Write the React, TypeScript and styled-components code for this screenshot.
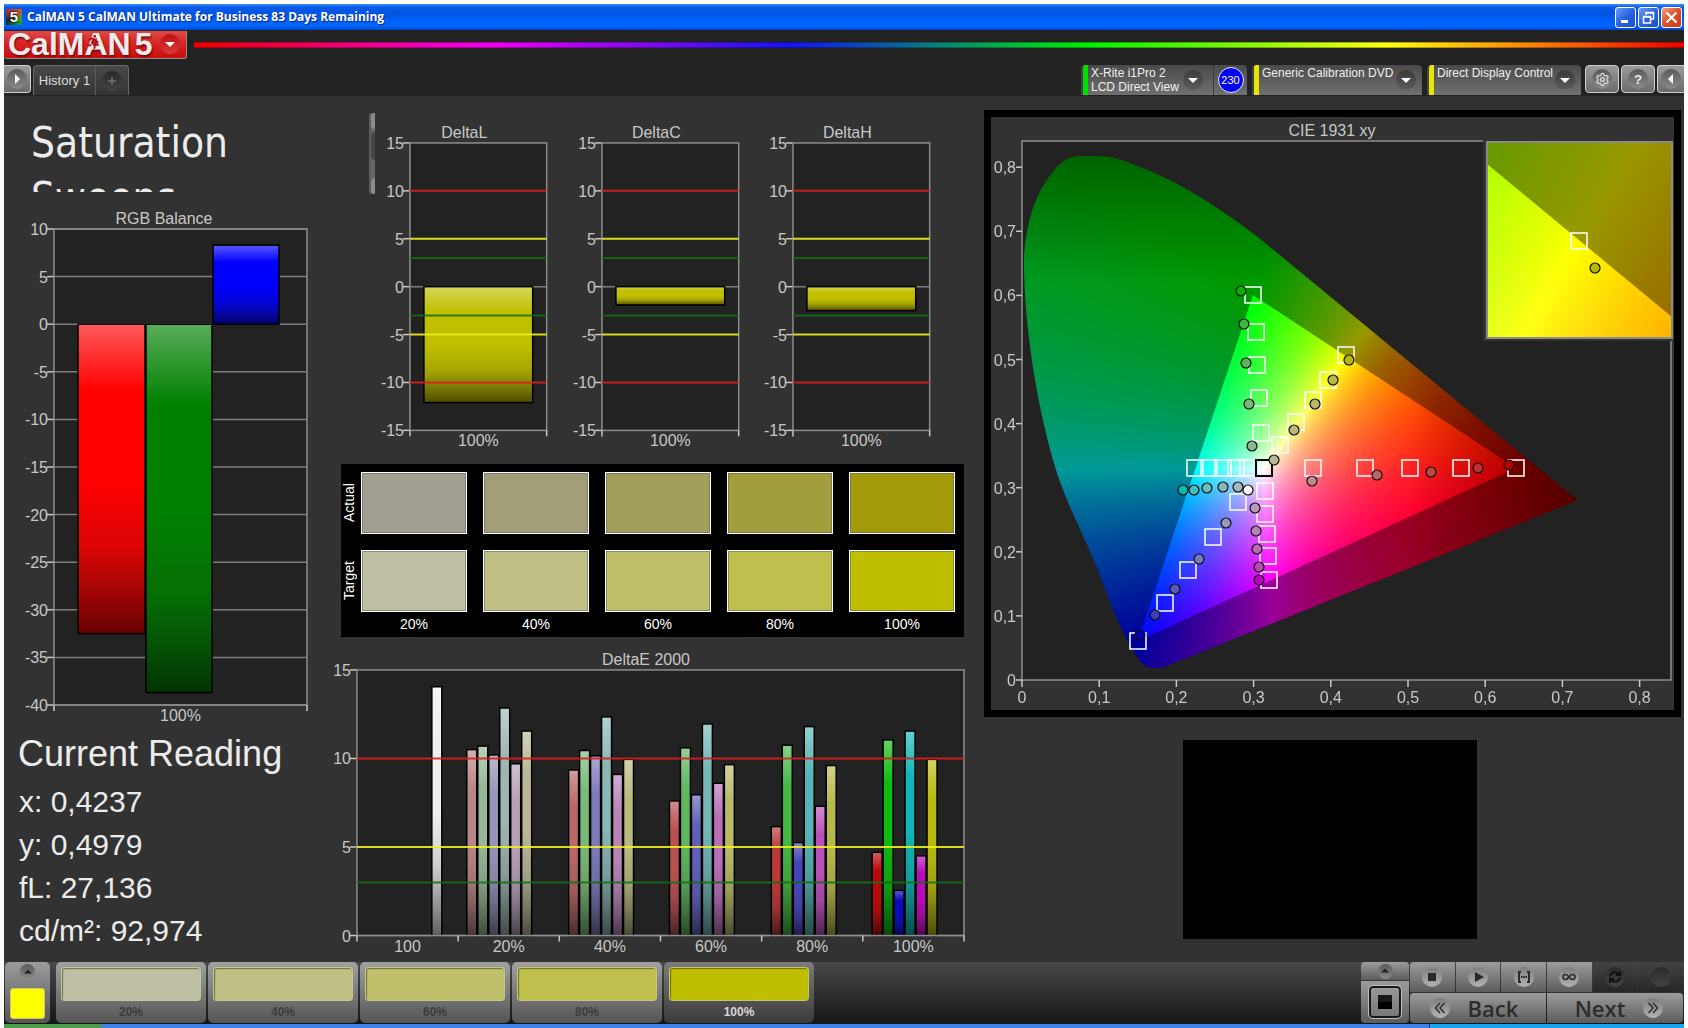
import React, { useLayoutEffect, useRef } from "react";
import styled, { createGlobalStyle } from "styled-components";
import { FaRunning } from "react-icons/fa";
import { Settings } from "lucide-react";

const SANS = '"Liberation Sans", Arial, sans-serif';
const HUMANIST = '"Open Sans", "Noto Sans", sans-serif';

const GlobalStyle = createGlobalStyle`
  *, *::before, *::after { box-sizing: border-box; }
  body { margin: 0; background: #fdfdfd; font-family: ${SANS}; color: #ececec; }
  button { font-family: inherit; color: inherit; border: 0; padding: 0; cursor: pointer; }
  h1, h2, p { margin: 0; font-weight: 400; }
  svg { display: block; }
`;

/* ---------- window frame ---------- */

const Window = styled.div`
  display: flex;
  flex-direction: column;
  min-height: 100vh;
  padding: 4px 4px 0;
`;

const TitleBar = styled.header`
  display: flex;
  align-items: center;
  gap: 5px;
  height: 26px;
  padding: 0 2px;
  background: linear-gradient(#3c93ff 0, #0a5ce8 3px, #0055e2 9px, #0061fb 17px, #0066ff 22px, #0046c8 26px);
`;

const AppIcon = styled.span`
  width: 16px;
  height: 16px;
  background: conic-gradient(#d33, #a63, #2a2, #173, #222, #933, #d33);
  color: #fff;
  font: bold 15px/16px ${SANS};
  text-align: center;
  text-shadow: 0 0 2px #000, 0 0 2px #000;
`;

const TitleText = styled.span`
  flex: 1;
  color: #fff;
  font: 700 12px/18px ${HUMANIST};
  text-shadow: 1px 1px 1px #10257c;
`;

const WindowButtons = styled.div`
  display: flex;
  gap: 2px;
`;

const WindowButton = styled.button<{ $close?: boolean }>`
  display: grid;
  place-items: center;
  width: 21px;
  height: 21px;
  border: 1px solid #fff;
  border-radius: 3px;
  background: ${(p) =>
    p.$close
      ? "linear-gradient(135deg, #f0a088, #e04e26 50%, #c83c14)"
      : "linear-gradient(135deg, #6f9df8, #2b62e0 50%, #1a50cc)"};
`;

/* ---------- application header ---------- */

const AppHeader = styled.div`
  background: #222;
  height: 66px;
  display: flex;
  flex-direction: column;
  gap: 6px;
`;

const BrandRow = styled.div`
  display: flex;
  align-items: center;
  gap: 7px;
  height: 29px;
`;

const Logo = styled.button`
  position: relative;
  display: flex;
  align-items: center;
  gap: 4px;
  width: 183px;
  height: 28px;
  padding: 0 6px 0 4px;
  overflow: hidden;
  border: solid #8d8d8d;
  border-width: 0 1px 1px 0;
  border-radius: 0 0 3px 3px;
  background: linear-gradient(#e04a48, #d62222 50%, #c80f0f);
`;

const LogoText = styled.span<{ $grow?: boolean }>`
  flex: ${(p) => (p.$grow ? 1 : "none")};
  text-align: left;
  white-space: nowrap;
  font: bold 32px/24px ${SANS};
  color: #ececec;
  text-shadow: 1px 2px 2px rgba(90, 0, 0, 0.7);
`;

const Runner = styled(FaRunning)`
  position: absolute;
  left: 82px;
  top: 4px;
  width: 14px;
  height: 14px;
  color: #b01010;
`;

const Spectrum = styled.div`
  flex: 1;
  height: 6px;
  background: linear-gradient(90deg, #f00000, #f000f0 20%, #1414f0 40%, #00f000 60%, #ffff10 80%, #f00000);
  border-bottom: 1px solid rgba(0, 0, 0, 0.3);
  border-top: 1px solid rgba(0, 0, 0, 0.3);
`;

const TabRow = styled.div`
  display: flex;
  align-items: flex-start;
  height: 31px;
`;

const Spacer = styled.div`
  flex: 1;
`;

const ChromeButton = styled.button<{ $edge?: "left" | "right" }>`
  display: grid;
  place-items: center;
  width: ${(p) => (p.$edge ? "27px" : "34px")};
  height: 28px;
  margin-left: ${(p) => (p.$edge === "left" ? "0" : "2px")};
  border: 1px solid #cfcfcf;
  border-left-width: ${(p) => (p.$edge === "left" ? 0 : 1)}px;
  border-right-width: ${(p) => (p.$edge === "right" ? 0 : 1)}px;
  border-radius: ${(p) => (p.$edge === "left" ? "0 4px 4px 0" : p.$edge === "right" ? "4px 0 0 4px" : "4px")};
  background: linear-gradient(#9a9a9a, #6c6c6c);
`;

const Disc = styled.span<{ $size?: number; $tone?: "dark" | "mid" | "light" | "off" }>`
  display: grid;
  place-items: center;
  flex: none;
  width: ${(p) => p.$size ?? 20}px;
  height: ${(p) => p.$size ?? 20}px;
  border-radius: 50%;
  background: ${(p) =>
    ({
      dark: "linear-gradient(#3a3a3a, #5c5c5c)",
      mid: "linear-gradient(#5a5a5a, #8a8a8a)",
      light: "linear-gradient(#7c7c7c, #b2b2b2)",
      off: "linear-gradient(#2a2a2a, #444)",
    })[p.$tone ?? "dark"]};
`;

const RedDisc = styled(Disc)`
  background: linear-gradient(#b81212, #dc3c3c);
`;

const HistoryTabs = styled.div`
  display: flex;
  height: 30px;
  margin-left: 2px;
  border: 1px solid #6a6a6a;
  border-bottom: 0;
  border-radius: 4px 4px 0 0;
  background: linear-gradient(#484848, #343434);
`;

const TabButton = styled.button<{ $narrow?: boolean }>`
  display: grid;
  place-items: center;
  width: ${(p) => (p.$narrow ? "33px" : "61px")};
  background: none;
  border-left: ${(p) => (p.$narrow ? "1px solid #5c5c5c" : "0")};
  font-size: 13px;
  white-space: nowrap;
  color: #dedede;
`;

const Devices = styled.div`
  display: flex;
  gap: 5px;
  margin-right: 2px;
`;

const Device = styled.div<{ $accent: string; $width: number }>`
  display: flex;
  width: ${(p) => p.$width}px;
  height: 30px;
  border-left: 2px solid #444;
  border-radius: 4px 4px 0 0;
  background: linear-gradient(90deg, ${(p) => p.$accent} 5px, transparent 5px), linear-gradient(#4a4a4a, #707070);
`;

const DevicePicker = styled.button`
  flex: 1;
  display: flex;
  align-items: center;
  justify-content: space-between;
  padding: 0 6px 0 8px;
  background: none;
  color: #f0f0f0;
  font-size: 12px;
  line-height: 14px;
  text-align: left;
  white-space: nowrap;
`;

const MeterPicker = styled(DevicePicker)`
  padding-right: 10px;
`;

const DeviceName = styled.span`
  align-self: flex-start;
  padding-top: 1px;
`;

const MeterBadge = styled.span`
  display: grid;
  place-items: center;
  width: 34px;
  border-left: 1px solid #3a3a3a;
`;

const MeterCount = styled.span`
  width: 26px;
  height: 26px;
  border: 1px solid #e8e8ff;
  border-radius: 50%;
  background: #0000f4;
  color: #fff;
  font-size: 11px;
  line-height: 24px;
  text-align: center;
`;

/* ---------- workspace ---------- */

const Workspace = styled.main`
  flex: 1;
  display: grid;
  grid-template-columns: 288fr 636fr 697fr;
  column-gap: 20px;
  align-items: start;
  padding: 14px 3px 4px 16px;
  background: #323232;
`;

const Column = styled.section`
  display: flex;
  flex-direction: column;
  min-width: 0;
`;

const TitleBox = styled.div`
  height: 82px;
  padding: 5px 0 0 11px;
  overflow: hidden;
`;

const PageTitle = styled.h1`
  font: 42px/55px "DejaVu Sans Condensed", "DejaVu Sans", sans-serif;
  font-stretch: condensed;
`;

const BalanceArea = styled.div`
  padding-top: 20px;
`;

const ReadingTitle = styled.h2`
  margin: 8px 0 6px -2px;
  font-size: 36px;
  line-height: 40px;
  white-space: nowrap;
`;

const Reading = styled.p`
  margin-left: -1px;
  font-size: 30px;
  line-height: 43px;
  white-space: nowrap;
`;

const DeltaRow = styled.div`
  display: grid;
  grid-template-columns: 6px 1fr;
  column-gap: 6px;
  align-items: start;
  padding: 3px 33px 0 41px;
`;

const ScrollTrack = styled.div`
  display: flex;
  flex-direction: column;
  justify-content: space-between;
  height: 81px;
  border-left: 2px solid #5e5e5e;
  border-radius: 3px 0 0 3px;
  background: #666;
`;

const ScrollPart = styled.span<{ $thumb?: boolean }>`
  height: ${(p) => (p.$thumb ? 28 : 16)}px;
  margin-bottom: ${(p) => (p.$thumb ? 16 : 0)}px;
  border-radius: 4px 0 0 4px;
  background: ${(p) => (p.$thumb ? "#474747" : "#8c8c8c")};
`;

const DeltaCharts = styled.div`
  display: grid;
  grid-template-columns: repeat(3, 1fr);
  column-gap: 25px;
  padding-top: 10px;
`;

const SwatchPanel = styled.div`
  display: grid;
  grid-template-columns: 12px repeat(5, 1fr);
  grid-template-rows: 78px 63px 24px;
  margin: 12px 0 0 13px;
  padding: 8px 1px 0 0;
  background: #000;
  color: #fff;
  font-size: 14px;
  line-height: 16px;
  text-align: center;
`;

const SideLabel = styled.span`
  writing-mode: vertical-rl;
  transform: rotate(180deg);
  justify-self: start;
  height: 62px;
  text-align: center;
`;

const Swatch = styled.div<{ $color: string }>`
  height: 62px;
  margin: 0 8px;
  border: 1px solid #fff;
  outline: 1px solid rgba(90, 90, 90, 0.5);
  outline-offset: -2px;
  background: ${(p) => p.$color};
`;

const SwatchLabel = styled.span`
  padding-top: 3px;
`;

const CiePanel = styled.div`
  border: 7px solid #000;
  background: #323232;
`;

const PatternRow = styled.div`
  display: grid;
  grid-template-columns: 199fr 294fr 204fr;
  margin-top: 23px;
`;

const PatternPreview = styled.div`
  grid-column: 2;
  aspect-ratio: 294 / 199;
  background: #000;
`;

/* ---------- footer ---------- */

const Footer = styled.footer`
  display: flex;
  height: 62px;
  padding-left: 1px;
  background: linear-gradient(#484848, #161616);
`;

const SourceButton = styled.button`
  display: flex;
  flex-direction: column;
  align-items: center;
  justify-content: space-between;
  width: 45px;
  height: 61px;
  margin-right: 6px;
  padding: 2px 5px 4px;
  border-radius: 5px;
  background: linear-gradient(#9c9c9c, #555);
`;

const YellowChip = styled.span`
  width: 35px;
  height: 31px;
  border: 1px solid #c9c96a;
  border-radius: 3px;
  background: #ff0;
`;

const LevelList = styled.div`
  display: flex;
  gap: 2px;
  flex: 1;
`;

const LevelButton = styled.button<{ $active?: boolean }>`
  display: flex;
  flex-direction: column;
  width: 150px;
  height: 61px;
  padding: 5px 5px 0;
  border-radius: 5px;
  background: ${(p) => (p.$active ? "linear-gradient(#7c7c7c, #3a3a3a)" : "linear-gradient(#a0a0a0, #555)")};
  color: ${(p) => (p.$active ? "#d6d6d6" : "#3c3c3c")};
  font-size: 12px;
  font-weight: bold;
  line-height: 22px;
  text-align: center;
`;

const LevelColor = styled.span<{ $color: string }>`
  height: 38px;
  border: 1px solid rgba(200, 200, 150, 0.75);
  border-radius: 4px;
  box-shadow: inset 1px 1px 1px rgba(60, 60, 0, 0.6);
  background: ${(p) => p.$color};
`;

const Nav = styled.div`
  display: grid;
  grid-template-columns: 49px 273px;
  margin-right: 1px;
`;

const PatternColumn = styled.div`
  display: grid;
  grid-template-rows: 18px 42px;
  row-gap: 1px;
  padding-right: 1px;
`;

const PadButton = styled.button<{ $off?: boolean; $radius?: string }>`
  display: flex;
  align-items: center;
  justify-content: center;
  gap: 18px;
  border-radius: ${(p) => p.$radius ?? "0"};
  background: ${(p) => (p.$off ? "linear-gradient(#444, #262626)" : "linear-gradient(#9c9c9c, #5c5c5c)")};
  color: #2c2c2c;
  font: 600 22px/28px ${HUMANIST};
`;

const PatternChip = styled.span`
  display: grid;
  place-items: center;
  width: 32px;
  height: 32px;
  border: 2px solid #1a1a1a;
  outline: 1px solid #bdbdbd;
  border-radius: 4px;
  background: linear-gradient(#999, #777);
`;

const PatternCore = styled.span`
  width: 14px;
  height: 14px;
  background: linear-gradient(#181818 50%, #000 50%);
`;

const Transport = styled.div`
  display: grid;
  grid-template-columns: repeat(6, 1fr);
  grid-template-rows: 30px 30px;
  gap: 1px;
`;

const BackButton = styled(PadButton)`
  grid-column: 1 / span 3;
  padding-right: 8px;
`;

const NextButton = styled(PadButton)`
  grid-column: 4 / span 3;
  padding-left: 8px;
`;

const Taskbar = styled.div`
  display: grid;
  grid-template-columns: 96px 1fr 255px;
  height: 4px;
  background: linear-gradient(90deg, #4b9c4b 95px, #3b82ea 100px);
`;

const Tray = styled.div`
  grid-column: 3;
  border-left: 1px solid #0c3c90;
  background: #18a4f2;
`;

/* ---------- small drawings ---------- */

const Arrow = ({ dir, color = "#fff", size = 10 }: { dir: "down" | "up" | "left" | "right"; color?: string; size?: number }) => {
  const d = { down: "M0 3h10L5 8z", up: "M0 7h10L5 2z", left: "M7 0v10L2 5z", right: "M3 0v10L8 5z" }[dir];
  return (
    <svg width={size} height={size} viewBox="0 0 10 10">
      <path d={d} fill={color} />
    </svg>
  );
};

const Glyph = ({ d, fill = false, width = 2 }: { d: string; fill?: boolean; width?: number }) => (
  <svg width="16" height="16" viewBox="0 0 16 16">
    <path d={d} fill={fill ? "#2a2a2a" : "none"} stroke={fill ? "none" : "#2a2a2a"} strokeWidth={width} />
  </svg>
);

/* ---------- charts ---------- */

const ChartSvg = styled.svg`
  width: 100%;
  height: auto;
  overflow: visible;
  font-family: ${SANS};
  font-size: 16px;
`;

const BarShade = ({ id }: { id: string }) => (
  <linearGradient id={id} x1="0" y1="0" x2="0" y2="1">
    <stop offset="0" stopColor="#fff" stopOpacity="0.35" />
    <stop offset="0.22" stopColor="#fff" stopOpacity="0" />
    <stop offset="0.5" stopColor="#222" stopOpacity="0" />
    <stop offset="0.72" stopColor="#1c1c1c" stopOpacity="0.16" />
    <stop offset="1" stopColor="#000" stopOpacity="0.6" />
  </linearGradient>
);

type Bar = { x: number; width: number; value: number; color: string };
type Level = { value: number; color: string };

type BarChartProps = {
  id: string;
  title: string;
  width: number;
  height: number;
  plot: { x: number; y: number; w: number; h: number };
  max: number;
  min: number;
  step: number;
  bars: Bar[];
  categories: string[];
  grid?: boolean;
  levels?: Level[];
};

function BarChart({ id, title, width, height, plot, max, min, step, bars, categories, grid, levels = [] }: BarChartProps) {
  const toY = (v: number) => plot.y + ((max - v) / (max - min)) * plot.h;
  const ticks: number[] = [];
  for (let v = max; v >= min; v -= step) ticks.push(v);
  const slot = plot.w / categories.length;
  const right = plot.x + plot.w;
  return (
    <ChartSvg viewBox={`0 0 ${width} ${height}`} role="img" aria-label={title}>
      <defs>
        <BarShade id={`${id}-shade`} />
      </defs>
      <text x={width / 2} y={plot.y - 5} textAnchor="middle" fill="#c8c8c8">
        {title}
      </text>
      <rect x={plot.x} y={plot.y} width={plot.w} height={plot.h} fill="#222" />
      {ticks.map((v) => (
        <g key={v}>
          {(grid || v === 0) && <line x1={plot.x} x2={right} y1={toY(v)} y2={toY(v)} stroke="#7c7c7c" strokeWidth="1.5" />}
          <line x1={plot.x - 7} x2={plot.x} y1={toY(v)} y2={toY(v)} stroke="#c8c8c8" strokeWidth="1.5" />
          <text x={plot.x - 6} y={toY(v) + 6} textAnchor="end" fill="#c8c8c8">
            {v}
          </text>
        </g>
      ))}
      {bars.map((b, i) => {
        const top = Math.min(toY(0), toY(b.value));
        const h = Math.abs(toY(0) - toY(b.value));
        return (
          <g key={i}>
            <rect x={b.x} y={top} width={b.width} height={h} fill={b.color} />
            <rect x={b.x} y={top} width={b.width} height={h} fill={`url(#${id}-shade)`} stroke="#000" strokeWidth="1.5" />
          </g>
        );
      })}
      <rect x={plot.x} y={plot.y} width={plot.w} height={plot.h} fill="none" stroke="#8e8e8e" strokeWidth="1.5" />
      {levels.map((l) => (
        <line key={l.value} x1={plot.x} x2={right} y1={toY(l.value)} y2={toY(l.value)} stroke={l.color} strokeWidth="2" />
      ))}
      {categories.map((c, i) => (
        <g key={c}>
          <line x1={plot.x + i * slot} x2={plot.x + i * slot} y1={plot.y + plot.h} y2={plot.y + plot.h + 6} stroke="#c8c8c8" strokeWidth="1.5" />
          <text x={plot.x + (i + 0.5) * slot} y={plot.y + plot.h + 16} textAnchor="middle" fill="#c8c8c8">
            {c}
          </text>
        </g>
      ))}
      <line x1={right} x2={right} y1={plot.y + plot.h} y2={plot.y + plot.h + 6} stroke="#c8c8c8" strokeWidth="1.5" />
    </ChartSvg>
  );
}

const RED = "rgba(214, 32, 32, 0.9)";
const YELLOW = "rgba(240, 240, 30, 0.9)";
const GREEN = "rgba(20, 110, 20, 0.85)";

const deltaLevels: Level[] = [
  { value: 10, color: RED },
  { value: -10, color: RED },
  { value: 5, color: YELLOW },
  { value: -5, color: YELLOW },
  { value: 3, color: GREEN },
  { value: -3, color: GREEN },
];

const deltas = [
  { title: "DeltaL", value: -12.1 },
  { title: "DeltaC", value: -1.9 },
  { title: "DeltaH", value: -2.5 },
];

const deltaE: { start: number; colors: string[]; values: number[] }[] = [
  { start: 139, colors: ["#b98585", "#95b995", "#9595b9", "#9fb5b5", "#b79fb7", "#b9b798"], values: [10.5, 10.7, 10.2, 12.85, 9.7, 11.55] },
  { start: 241, colors: ["#b96767", "#7bb97b", "#7b7bb9", "#8cb6b6", "#b985b9", "#b9b980"], values: [9.35, 10.45, 10.15, 12.35, 9.1, 9.95] },
  { start: 342, colors: ["#b95050", "#5fb75f", "#6060b9", "#74b6b6", "#b970b9", "#b9b968"], values: [7.6, 10.6, 7.95, 11.95, 8.6, 9.65] },
  { start: 444, colors: ["#b93838", "#44b944", "#4444b9", "#56b6b6", "#b950b9", "#b9b94a"], values: [6.15, 10.75, 5.25, 11.8, 7.3, 9.6] },
  { start: 545, colors: ["#b90a0a", "#10b910", "#0a0ab9", "#10b6b6", "#b90ab9", "#b9b910"], values: [4.7, 11.05, 2.55, 11.55, 4.5, 9.95] },
];

const deltaEBars: Bar[] = [
  { x: 104, width: 10, value: 14.05, color: "#f0f0f0" },
  ...deltaE.flatMap((g) => g.values.map((value, i) => ({ x: g.start + i * 11, width: 10, value, color: g.colors[i] }))),
];

/* ---------- CIE 1931 diagram ---------- */

const ORIGIN = { x: 1023, y: 680 };
const SCALE = { x: 772, y: 641 };
const PLOT = { x: 1023, y: 141, w: 649, h: 539 };
const INSET = { x: 1488, y: 142, w: 185, h: 196 };

const LOCUS =
  "M1025 263C1025 240 1031 215 1036 203C1041 190 1050 174 1061 164C1069 157 1074 156 1084 156L1099 156" +
  "C1113 156 1127 161 1138 166C1158 173 1180 184 1201 197C1225 212 1250 229 1271 247L1572 495Q1583 499 1572 503" +
  "L1168 666Q1163 668 1158 668L1152 668Q1148 668 1142 662C1128 645 1112 606 1100 573C1084 532 1065 500 1054 460C1038 404 1025 325 1025 263Z";
const GAMUT = "M1517 468L1254 295L1139 641Z";

function chromaColor(x: number, y: number): [number, number, number] {
  const yy = Math.max(y, 0.005);
  const X = x / yy;
  const Z = (1 - x - yy) / yy;
  const lin = [
    3.2406 * X - 1.5372 - 0.4986 * Z,
    -0.9689 * X + 1.8758 + 0.0415 * Z,
    0.0557 * X - 0.204 + 1.057 * Z,
  ].map((v) => Math.max(v, 0));
  const peak = Math.max(lin[0], lin[1], lin[2], 0.0001);
  const redFade = 1 - Math.min(0.5, Math.max(0, (x - 0.5) * 2.1));
  const greenFade = 1 - Math.min(0.35, Math.max(0, (y - 0.62) * 1.75));
  const k = (255 * redFade * greenFade) / peak;
  return [lin[0] * k, lin[1] * k, lin[2] * k];
}

type FieldProps = {
  box: { x: number; y: number; w: number; h: number };
  toChroma: (px: number, py: number) => [number, number];
  locus?: Path2D;
  gamut: Path2D;
};

const Surface = styled.canvas`
  display: block;
  width: 100%;
  height: 100%;
`;

function ChromaField({ box, toChroma, locus, gamut }: FieldProps) {
  const ref = useRef<HTMLCanvasElement>(null);
  useLayoutEffect(() => {
    const ctx = ref.current!.getContext("2d")!;
    ctx.setTransform(1, 0, 0, 1, 0, 0);
    ctx.clearRect(0, 0, box.w, box.h);
    const layer = (strength: number) => {
      const c = document.createElement("canvas");
      c.width = box.w;
      c.height = box.h;
      const g = c.getContext("2d")!;
      const img = g.createImageData(box.w, box.h);
      for (let j = 0; j < box.h; j++) {
        for (let i = 0; i < box.w; i++) {
          const [x, y] = toChroma(box.x + i, box.y + j);
          const rgb = chromaColor(x, y);
          const o = (j * box.w + i) * 4;
          img.data[o] = rgb[0] * strength;
          img.data[o + 1] = rgb[1] * strength;
          img.data[o + 2] = rgb[2] * strength;
          img.data[o + 3] = 255;
        }
      }
      g.putImageData(img, 0, 0);
      return c;
    };
    const paint = (strength: number, clip?: Path2D) => {
      ctx.save();
      ctx.translate(-box.x, -box.y);
      if (clip) ctx.clip(clip);
      ctx.drawImage(layer(strength), box.x, box.y);
      ctx.restore();
    };
    paint(0.6, locus);
    paint(1, gamut);
  }, []);
  return (
    <foreignObject x={box.x} y={box.y} width={box.w} height={box.h}>
      <Surface ref={ref} width={box.w} height={box.h} />
    </foreignObject>
  );
}

const targets: [number, number][] = [
  [1196, 468], [1210, 468], [1224, 468], [1237, 468], [1249, 468],
  [1314, 468], [1366, 468], [1411, 468], [1462, 468], [1517, 468],
  [1239, 502], [1214, 537], [1189, 570], [1166, 603], [1139, 641],
  [1266, 491], [1266, 514], [1268, 534], [1269, 556], [1270, 580],
  [1262, 433], [1260, 398], [1258, 365], [1257, 332], [1254, 295],
  [1281, 445], [1297, 422], [1314, 400], [1329, 380], [1347, 355],
];

const readings: [number, number, string][] = [
  [1239, 487, "#a0baba"], [1224, 487, "#84b8b8"], [1208, 488, "#6cbcb8"], [1195, 490, "#48bcb8"], [1184, 490, "#00bcb4"],
  [1249, 490, "#fff"],
  [1313, 481, "#bc8c8c"], [1378, 475, "#bc6464"], [1432, 472, "#bc4848"], [1479, 468, "#bc3030"], [1510, 465, "#bc0000"],
  [1275, 460, "#b8b898"], [1295, 430, "#b8b880"], [1316, 404, "#b8b868"], [1334, 380, "#b8b848"], [1350, 360, "#b8b800"],
  [1227, 523, "#9898bc"], [1200, 559, "#7878bc"], [1176, 589, "#5858bc"], [1156, 615, "#3c3cbc"], [1141, 635, "#0000b4"],
  [1256, 508, "#bc98bc"], [1257, 531, "#bc80bc"], [1258, 549, "#bc68bc"], [1260, 567, "#bc48bc"], [1260, 580, "#bc00bc"],
  [1253, 446, "#90b890"], [1250, 404, "#78b878"], [1247, 363, "#58b858"], [1245, 324, "#40b840"], [1242, 291, "#00b400"],
];

const axis = [0, 1, 2, 3, 4, 5, 6, 7, 8];
const axisLabel = (n: number) => (n === 0 ? "0" : `0,${n}`);

function CieChart() {
  const mainLocus = useRef(new Path2D(LOCUS)).current;
  const mainGamut = useRef(new Path2D(GAMUT)).current;
  const insetGamut = useRef(new Path2D("M1488 164L1673 317L1673 338L1488 338Z")).current;
  return (
    <ChartSvg viewBox="992 117 683 593" role="img" aria-label="CIE 1931 xy">
      <text x="1333" y="136" textAnchor="middle" fill="#c8c8c8">
        CIE 1931 xy
      </text>
      <rect x={PLOT.x} y={PLOT.y} width={PLOT.w} height={PLOT.h} fill="#222" />
      <ChromaField
        box={PLOT}
        toChroma={(px, py) => [(px - ORIGIN.x) / SCALE.x, (ORIGIN.y - py) / SCALE.y]}
        locus={mainLocus}
        gamut={mainGamut}
      />
      <rect x={PLOT.x} y={PLOT.y} width={PLOT.w} height={PLOT.h} fill="none" stroke="#8e8e8e" strokeWidth="1.5" />
      {axis.map((n) => {
        const x = ORIGIN.x + (n * SCALE.x) / 10;
        const y = ORIGIN.y - (n * SCALE.y) / 10;
        return (
          <g key={n} fill="#c8c8c8" stroke="none">
            <line x1={x} x2={x} y1={ORIGIN.y} y2={ORIGIN.y + 7} stroke="#c8c8c8" strokeWidth="1.5" />
            <text x={x} y={ORIGIN.y + 23} textAnchor="middle">
              {axisLabel(n)}
            </text>
            <line x1={ORIGIN.x - 6} x2={ORIGIN.x} y1={y} y2={y} stroke="#c8c8c8" strokeWidth="1.5" />
            <text x={ORIGIN.x - 6} y={y + 6} textAnchor="end">
              {axisLabel(n)}
            </text>
          </g>
        );
      })}
      {targets.map(([x, y]) => (
        <rect key={`${x}-${y}`} x={x - 8} y={y - 8} width="16" height="16" fill="none" stroke="#fff" strokeWidth="1.5" />
      ))}
      <rect x="1257" y="460" width="16" height="16" fill="none" stroke="#000" strokeWidth="2" />
      {readings.map(([x, y, color]) => (
        <circle key={`${x}-${y}`} cx={x} cy={y} r="5" fill={color} stroke="#101010" strokeWidth="1.2" />
      ))}
      <rect x="1484" y="139" width="190" height="202" fill="#323232" />
      <ChromaField
        box={INSET}
        toChroma={(px, py) => [0.4193 + (px - 1580) / 3520, 0.5053 - (py - 241) / 3650]}
        gamut={insetGamut}
      />
      <rect x={INSET.x} y={INSET.y} width={INSET.w} height={INSET.h} fill="none" stroke="#8c8c82" strokeWidth="2" />
      <rect x="1572" y="233" width="16" height="16" fill="none" stroke="#fff" strokeWidth="1.5" />
      <circle cx="1596" cy="268" r="5" fill="#b8b800" stroke="#101010" strokeWidth="1.2" />
    </ChartSvg>
  );
}

/* ---------- data for swatches ---------- */

const levels = [
  { label: "20%", actual: "#a29e92", target: "#bfbfa4" },
  { label: "40%", actual: "#a29e78", target: "#bfbf86" },
  { label: "60%", actual: "#a29e5c", target: "#bfbf6c" },
  { label: "80%", actual: "#a29e3c", target: "#bfbf4e" },
  { label: "100%", actual: "#a29a08", target: "#bfbf00" },
];

export default function App() {
  return (
    <Window>
      <GlobalStyle />
      <TitleBar>
        <AppIcon>5</AppIcon>
        <TitleText>CalMAN 5 CalMAN Ultimate for Business 83 Days Remaining</TitleText>
        <WindowButtons>
          <WindowButton aria-label="Minimize">
            <svg width="15" height="15" viewBox="0 0 15 15">
              <path d="M3 10h7v3H3z" fill="#fff" />
            </svg>
          </WindowButton>
          <WindowButton aria-label="Restore">
            <svg width="15" height="15" viewBox="0 0 15 15" fill="none" stroke="#fff" strokeWidth="1.5">
              <path d="M5 5V2.5h7.500V9H10M2.500 6.500h7V13h-7zM5 3h8M2.500 7h7" />
            </svg>
          </WindowButton>
          <WindowButton $close aria-label="Close">
            <svg width="15" height="15" viewBox="0 0 15 15" stroke="#fff" strokeWidth="2.2">
              <path d="M2.500 2.500l10 10M12.500 2.500l-10 10" />
            </svg>
          </WindowButton>
        </WindowButtons>
      </TitleBar>

      <AppHeader>
        <BrandRow>
          <Logo aria-label="CalMAN 5 menu">
            <LogoText>CalMAN</LogoText>
            <LogoText $grow>5</LogoText>
            <Runner />
            <RedDisc>
              <Arrow dir="down" />
            </RedDisc>
          </Logo>
          <Spectrum />
        </BrandRow>
        <TabRow>
          <ChromeButton $edge="left" aria-label="Expand">
            <Disc $tone="mid">
              <Arrow dir="right" />
            </Disc>
          </ChromeButton>
          <HistoryTabs>
            <TabButton>History 1</TabButton>
            <TabButton $narrow aria-label="Add history">
              <Disc $tone="off">
                <svg width="8" height="8" viewBox="0 0 8 8" stroke="#8a8a8a">
                  <path d="M4 0v8M0 4h8" />
                </svg>
              </Disc>
            </TabButton>
          </HistoryTabs>
          <Spacer />
          <Devices>
            <Device $accent="#00e000" $width={166}>
              <MeterPicker aria-haspopup="menu">
                <DeviceName>
                  X-Rite i1Pro 2<br />
                  LCD Direct View
                </DeviceName>
                <Disc>
                  <Arrow dir="down" />
                </Disc>
              </MeterPicker>
              <MeterBadge>
                <MeterCount>230</MeterCount>
              </MeterBadge>
            </Device>
            <Device $accent="#e6e600" $width={170}>
              <DevicePicker aria-haspopup="menu">
                <DeviceName>Generic Calibration DVD</DeviceName>
                <Disc>
                  <Arrow dir="down" />
                </Disc>
              </DevicePicker>
            </Device>
            <Device $accent="#e6e600" $width={154}>
              <DevicePicker aria-haspopup="menu">
                <DeviceName>Direct Display Control</DeviceName>
                <Disc>
                  <Arrow dir="down" />
                </Disc>
              </DevicePicker>
            </Device>
          </Devices>
          <ChromeButton aria-label="Settings">
            <Disc $tone="mid">
              <Settings size={15} color="#dcdcdc" strokeWidth={2} />
            </Disc>
          </ChromeButton>
          <ChromeButton aria-label="Help">
            <Disc $tone="mid">
              <b>?</b>
            </Disc>
          </ChromeButton>
          <ChromeButton $edge="right" aria-label="Collapse">
            <Disc $tone="mid">
              <Arrow dir="left" />
            </Disc>
          </ChromeButton>
        </TabRow>
      </AppHeader>

      <Workspace>
        <Column>
          <TitleBox>
            <PageTitle>
              Saturation
              <br />
              Sweeps
            </PageTitle>
          </TitleBox>
          <BalanceArea>
            <BarChart
              id="rgb"
              title="RGB Balance"
              width={288}
              height={514}
              plot={{ x: 34, y: 17, w: 253, h: 476 }}
              max={10}
              min={-40}
              step={5}
              grid
              categories={["100%"]}
              bars={[
                { x: 58, width: 67, value: -32.5, color: "#ff0000" },
                { x: 126, width: 66, value: -38.7, color: "#008000" },
                { x: 193, width: 66, value: 8.3, color: "#0000ff" },
              ]}
            />
          </BalanceArea>
          <ReadingTitle>Current Reading</ReadingTitle>
          <Reading>x: 0,4237</Reading>
          <Reading>y: 0,4979</Reading>
          <Reading>fL: 27,136</Reading>
          <Reading>cd/m²: 92,974</Reading>
        </Column>

        <Column>
          <DeltaRow>
            <ScrollTrack>
              <ScrollPart />
              <ScrollPart $thumb />
              <ScrollPart />
            </ScrollTrack>
            <DeltaCharts>
              {deltas.map((d) => (
                <BarChart
                  key={d.title}
                  id={d.title}
                  title={d.title}
                  width={167}
                  height={330}
                  plot={{ x: 29, y: 20, w: 137, h: 288 }}
                  max={15}
                  min={-15}
                  step={5}
                  categories={["100%"]}
                  levels={deltaLevels}
                  bars={[{ x: 43, width: 109, value: d.value, color: "#c0c000" }]}
                />
              ))}
            </DeltaCharts>
          </DeltaRow>

          <SwatchPanel>
            <SideLabel>Actual</SideLabel>
            {levels.map((l) => (
              <Swatch key={l.label} $color={l.actual} />
            ))}
            <SideLabel>Target</SideLabel>
            {levels.map((l) => (
              <Swatch key={l.label} $color={l.target} />
            ))}
            <span />
            {levels.map((l) => (
              <SwatchLabel key={l.label}>{l.label}</SwatchLabel>
            ))}
          </SwatchPanel>

          <BarChart
            id="de"
            title="DeltaE 2000"
            width={637}
            height={306}
            plot={{ x: 29, y: 33, w: 608, h: 266 }}
            max={15}
            min={0}
            step={5}
            categories={["100", "20%", "40%", "60%", "80%", "100%"]}
            levels={[
              { value: 10, color: RED },
              { value: 5, color: YELLOW },
              { value: 3, color: GREEN },
            ]}
            bars={deltaEBars}
          />
        </Column>

        <Column>
          <CiePanel>
            <CieChart />
          </CiePanel>
          <PatternRow>
            <PatternPreview />
          </PatternRow>
        </Column>
      </Workspace>

      <Footer>
        <SourceButton aria-label="Pattern source">
          <Disc $size={15} $tone="mid">
            <Arrow dir="up" color="#222" size={8} />
          </Disc>
          <YellowChip />
        </SourceButton>
        <LevelList>
          {levels.map((l) => (
            <LevelButton key={l.label} $active={l.label === "100%"}>
              <LevelColor $color={l.target} />
              {l.label}
            </LevelButton>
          ))}
        </LevelList>
        <Nav>
          <PatternColumn>
            <PadButton $radius="4px 4px 0 0" aria-label="Pattern window options">
              <Disc $size={15} $tone="mid">
                <Arrow dir="up" color="#222" size={8} />
              </Disc>
            </PadButton>
            <PadButton $radius="0 0 4px 4px" aria-label="Pattern window">
              <PatternChip>
                <PatternCore />
              </PatternChip>
            </PadButton>
          </PatternColumn>
          <Transport>
            <PadButton $radius="4px 0 0 0" aria-label="Stop">
              <Disc $tone="light">
                <Glyph fill d="M4 4h8v8H4z" />
              </Disc>
            </PadButton>
            <PadButton aria-label="Play">
              <Disc $tone="light">
                <Glyph fill d="M5 3l9 5-9 5z" />
              </Disc>
            </PadButton>
            <PadButton aria-label="Read series">
              <Disc $tone="light">
                <Glyph d="M5 3H3v10h2M11 3h2v10h-2M5 8h1.500M7.200 8h1.600M9.500 8H11" />
              </Disc>
            </PadButton>
            <PadButton aria-label="Read continuously">
              <Disc $tone="light">
                <Glyph width={1.6} d="M8 8C6 5 2 4.500 2 8s4 3 6 0 6-3.500 6 0-4 3-6 0z" />
              </Disc>
            </PadButton>
            <PadButton $off aria-label="Repeat">
              <Disc $tone="off">
                <svg width="16" height="16" viewBox="0 0 16 16" fill="none" stroke="#111" strokeWidth="2">
                  <path d="M3 7.500C3.500 3 9 2 12 5.500M13 2v4H9M13 8.500C12.500 13 7 14 4 10.500M3 14v-4h4" />
                </svg>
              </Disc>
            </PadButton>
            <PadButton $off $radius="0 4px 0 0" aria-label="Record">
              <Disc $tone="off" />
            </PadButton>
            <BackButton $radius="4px 0 0 4px">
              <Disc $tone="light">
                <Glyph width={1.4} d="M8 3L3.500 8 8 13M12.500 3L8 8l4.500 5" />
              </Disc>
              Back
            </BackButton>
            <NextButton $radius="0 4px 4px 0">
              Next
              <Disc $tone="light">
                <Glyph width={1.4} d="M3.500 3L8 8l-4.500 5M8 3l4.500 5L8 13" />
              </Disc>
            </NextButton>
          </Transport>
        </Nav>
      </Footer>
      <Taskbar>
        <Tray />
      </Taskbar>
    </Window>
  );
}
